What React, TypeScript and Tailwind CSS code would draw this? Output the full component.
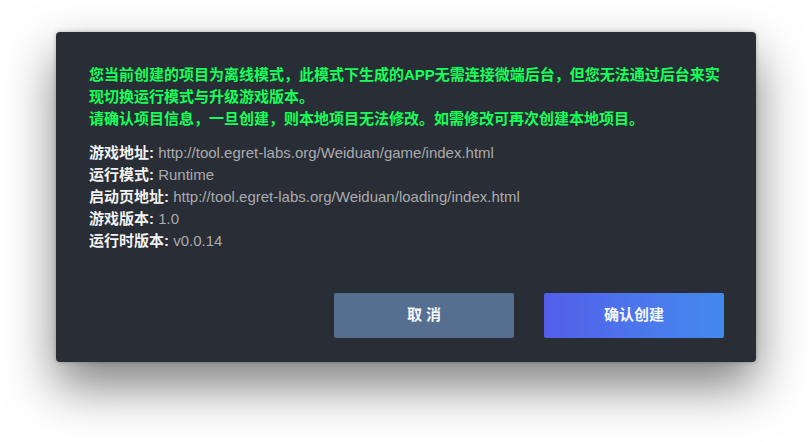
import React from "react";

export default function App() {
  const rows: [string, string][] = [
    ["游戏地址", "http://tool.egret-labs.org/Weiduan/game/index.html"],
    ["运行模式", "Runtime"],
    ["启动页地址", "http://tool.egret-labs.org/Weiduan/loading/index.html"],
    ["游戏版本", "1.0"],
    ["运行时版本", "v0.0.14"],
  ];
  return (
    <div
      className="w-[812px] h-[442px] bg-white overflow-hidden pt-[32px] pl-[56px]"
      style={{ fontFamily: '"Liberation Sans", "Noto Sans CJK SC", sans-serif' }}
    >
      <div className="w-[700px] h-[330px] bg-[#292d35] rounded-[4px] shadow-[0_24px_50px_rgba(0,0,0,0.5),0_0_4px_rgba(0,0,0,0.25)] pl-[33px] pr-[32px] pt-[32px] flex flex-col">
        <div className="text-[15px] leading-[22px] font-bold text-[#14ff5a]">
          <p>您当前创建的项目为离线模式，此模式下生成的APP无需连接微端后台，但您无法通过后台来实现切换运行模式与升级游戏版本。</p>
          <p>请确认项目信息，一旦创建，则本地项目无法修改。如需修改可再次创建本地项目。</p>
        </div>
        <div className="mt-[12px] text-[15px] leading-[22px]">
          {rows.map(([k, v]) => (
            <div key={k}>
              <span className="font-bold text-[#f2f2f2]">{k}:</span>{" "}
              <span className="text-[#a9abae]">{v}</span>
            </div>
          ))}
        </div>
        <div className="mt-[41px] flex justify-end gap-[30px]">
          <button className="w-[180px] h-[45px] rounded-[2px] bg-[#566f91] text-[15px] font-bold text-[#f4f6fa]">
            取 消
          </button>
          <button className="w-[180px] h-[45px] rounded-[2px] bg-gradient-to-r from-[#525ee9] to-[#438aee] text-[15px] font-bold text-[#f4f6fa]">
            确认创建
          </button>
        </div>
      </div>
    </div>
  );
}
